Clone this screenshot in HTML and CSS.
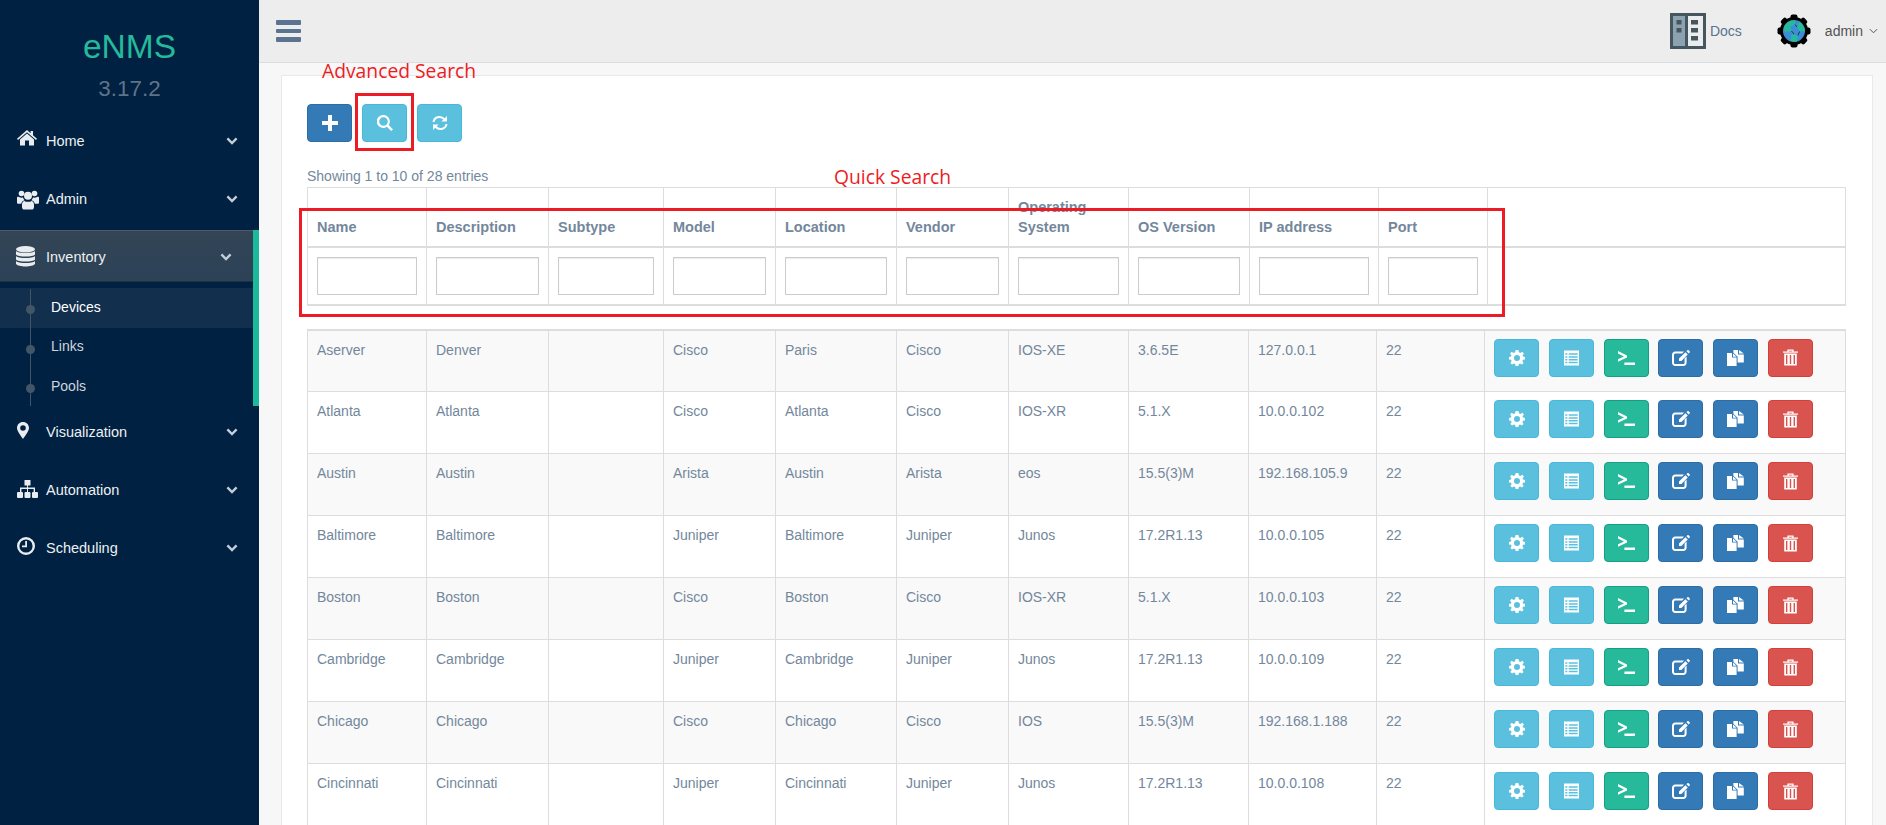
FILE: index.html
```html
<!DOCTYPE html>
<html lang="en">
    <head>
        <meta charset="UTF-8">
        <meta name="viewport" content="width=device-width, initial-scale=1.0">
        <title>eNMS - Devices</title>
        <link rel="stylesheet" href="styles.css">
    </head>
    <body>
        <svg class="sprite" width="0" height="0">
            <symbol id="i-home" viewBox="0 0 20 16"><path d="M10 0 L13.6 3.2 V1 H16 V5.3 L20 8.8 L19 10 L10 2.2 L1 10 L0 8.8 Z M10 3.6 L17 9.6 V15.6 H12 V10.6 H8 V15.6 H3 V9.6 Z"/></symbol>
            <symbol id="i-users" viewBox="0 0 22 20"><circle cx="4.5" cy="4" r="2.8"/><circle cx="17.5" cy="4" r="2.8"/><circle cx="11" cy="6.2" r="4"/><path d="M0 8.2 C0 7 1 7 2 7.4 C3.4 8.4 5 8.2 6 8 C6.4 9.4 7 10 7.6 10.8 C5.6 11.4 4.6 12.6 4.2 14.2 H1 C0 14.2 0 13.4 0 12.8 Z"/><path d="M22 8.2 C22 7 21 7 20 7.4 C18.6 8.4 17 8.2 16 8 C15.6 9.4 15 10 14.4 10.8 C16.4 11.4 17.4 12.6 17.8 14.2 H21 C22 14.2 22 13.4 22 12.8 Z"/><path d="M7.6 11.4 C9 12.6 13 12.6 14.4 11.4 C16 11.6 17 13 17 15 V17.4 C17 19 16 20 14.8 20 H7.2 C6 20 5 19 5 17.4 V15 C5 13 6 11.6 7.6 11.4 Z"/></symbol>
            <symbol id="i-database" viewBox="0 0 19 21"><ellipse cx="9.5" cy="3.2" rx="9.5" ry="3.2"/><path d="M0 5 C2 7.6 17 7.6 19 5 V8.4 C17 11.2 2 11.2 0 8.4 Z"/><path d="M0 10 C2 12.8 17 12.8 19 10 V13.4 C17 16.2 2 16.2 0 13.4 Z"/><path d="M0 15 C2 17.8 17 17.8 19 15 V17.8 C17 21.4 2 21.4 0 17.8 Z"/></symbol>
            <symbol id="i-marker" viewBox="0 0 12 17"><path fill-rule="evenodd" d="M6 0 C9.4 0 12 2.6 12 6 C12 9 8 14 6 17 C4 14 0 9 0 6 C0 2.6 2.6 0 6 0 Z M6 3.2 A2.8 2.8 0 1 0 6 8.8 A2.8 2.8 0 1 0 6 3.2 Z"/></symbol>
            <symbol id="i-sitemap" viewBox="0 0 21 18"><path d="M7.5 0 H13.5 V5.4 H11 V7.6 H18 V12 H16.6 V9 H11 V12 H10 V9 H4.4 V12 H3 V7.6 H10 V5.4 H7.5 Z"/><rect x="0" y="12" width="6" height="6" rx="1"/><rect x="7.5" y="12" width="6" height="6" rx="1"/><rect x="15" y="12" width="6" height="6" rx="1"/></symbol>
            <symbol id="i-clock" viewBox="0 0 18 18"><path fill-rule="evenodd" d="M9 0 A9 9 0 1 1 9 18 A9 9 0 1 1 9 0 Z M9 2.4 A6.6 6.6 0 1 0 9 15.6 A6.6 6.6 0 1 0 9 2.4 Z"/><path d="M8.2 4 H10 V10.2 H5 V8.6 H8.2 Z"/></symbol>
            <symbol id="i-plus" viewBox="0 0 16 16"><path d="M6 0 H10 V6 H16 V10 H10 V16 H6 V10 H0 V6 H6 Z"/></symbol>
            <symbol id="i-search" viewBox="0 0 16 16"><path fill-rule="evenodd" d="M6.5 0 A6.5 6.5 0 0 1 11.7 10.1 L16 14.4 L14.2 16 L9.9 11.8 A6.5 6.5 0 1 1 6.5 0 Z M6.5 2.2 A4.3 4.3 0 1 0 6.5 10.8 A4.3 4.3 0 1 0 6.5 2.2 Z"/></symbol>
            <symbol id="i-refresh" viewBox="0 0 16 16"><path d="M1.6 7 C2 2.4 8.2 0 12.4 4.2" fill="none" stroke="currentColor" stroke-width="2"/><path d="M14.4 9 C14 13.6 7.8 16 3.6 11.8" fill="none" stroke="currentColor" stroke-width="2"/><path d="M15 1 V6.6 H9.4 Z"/><path d="M1 15 V9.4 H6.6 Z"/></symbol>
            <symbol id="i-cog" viewBox="0 0 16 16"><path fill-rule="evenodd" d="M6.6 0 H9.4 L9.9 2.2 L11.4 2.9 L13.3 1.7 L14.9 3.6 L13.6 5.4 L14 6.6 L16 7 V9.4 L14 9.8 L13.4 11.1 L14.6 12.9 L12.9 14.6 L11.1 13.4 L9.9 13.9 L9.4 16 H6.6 L6.1 13.9 L4.9 13.4 L3.1 14.6 L1.4 12.9 L2.6 11.1 L2 9.8 L0 9.4 V7 L2 6.6 L2.4 5.4 L1.1 3.6 L2.7 1.7 L4.6 2.9 L6.1 2.2 Z M8 5 A3 3 0 1 0 8 11 A3 3 0 1 0 8 5 Z"/></symbol>
            <symbol id="i-list" viewBox="0 0 16 16"><path fill-rule="evenodd" d="M0 0 H16 V16 H0 Z M1.4 3 V4.6 H3.6 V3 Z M5 3 V4.6 H14.6 V3 Z M1.4 6 V7.6 H3.6 V6 Z M5 6 V7.6 H14.6 V6 Z M1.4 9 V10.6 H3.6 V9 Z M5 9 V10.6 H14.6 V9 Z M1.4 12 V13.6 H3.6 V12 Z M5 12 V13.6 H14.6 V12 Z"/></symbol>
            <symbol id="i-terminal" viewBox="0 0 17 14"><path d="M0 0 L9 4.4 V6.4 L0 10.8 V8.2 L6 5.4 L0 2.6 Z M6.4 11.6 H17 V14 H6.4 Z"/></symbol>
            <symbol id="i-edit" viewBox="0 0 18 16"><path d="M3.2 1.6 H12 L10.2 3.6 H3.6 C2.6 3.6 2 4.2 2 5.2 V12.4 C2 13.4 2.6 14 3.6 14 H11 C12 14 12.6 13.4 12.6 12.4 V8.4 L14.6 6.4 V12.8 C14.6 14.8 13.2 16 11.4 16 H3.2 C1.4 16 0 14.8 0 12.8 V4.8 C0 3 1.4 1.6 3.2 1.6 Z"/><path d="M13.4 2.2 L15.8 4.6 L9.4 11 H7 V8.6 Z M14.4 1.2 L15.4 0.2 C15.8 -0.1 16.2 -0.1 16.6 0.2 L17.6 1.3 C18 1.7 18 2.2 17.6 2.5 L16.8 3.6 Z"/></symbol>
            <symbol id="i-copy" viewBox="0 0 17 16"><path d="M0 3 H5 V7.6 H9.6 V16 H0 Z"/><path d="M6 3.4 L9.6 6.8 H6 Z"/><path d="M6.4 0 H11 V4.4 H16.8 V12.4 H10.6 V6.8 L6.4 2.8 Z"/><path d="M12 0 L16.8 3.4 H12 Z"/></symbol>
            <symbol id="i-trash" viewBox="0 0 15 16"><path fill-rule="evenodd" d="M4.4 0 H10.6 V2 H15 V3.2 H0 V2 H4.4 Z M5.8 1.2 V2 H9.2 V1.2 Z M1.2 4 H13.8 V16 H1.2 Z M3 5.4 V14.6 H4.4 V5.4 Z M6.8 5.4 V14.6 H8.2 V5.4 Z M10.6 5.4 V14.6 H12 V5.4 Z"/></symbol>
            <symbol id="i-chevron" viewBox="0 0 12 8"><path d="M1.4 1.4 L6 6 L10.6 1.4" fill="none" stroke="currentColor" stroke-width="2.4"/></symbol>
        </svg>

        <nav class="sidebar">
            <div class="brand">
                <div class="brand-name">eNMS</div>
                <div class="brand-version">3.17.2</div>
            </div>
            <ul class="menu">
                <li class="menu-item">
                    <svg class="menu-icon icon-home"><use href="#i-home"/></svg>
                    <span class="menu-label">Home</span>
                    <svg class="menu-chevron"><use href="#i-chevron"/></svg>
                </li>
                <li class="menu-item">
                    <svg class="menu-icon icon-users"><use href="#i-users"/></svg>
                    <span class="menu-label">Admin</span>
                    <svg class="menu-chevron"><use href="#i-chevron"/></svg>
                </li>
                <li class="menu-group">
                    <div class="menu-item menu-active">
                        <svg class="menu-icon icon-database"><use href="#i-database"/></svg>
                        <span class="menu-label">Inventory</span>
                        <svg class="menu-chevron"><use href="#i-chevron"/></svg>
                    </div>
                    <ul class="submenu">
                        <li class="sub-item sub-current"><span class="sub-dot"></span>Devices</li>
                        <li class="sub-item"><span class="sub-dot"></span>Links</li>
                        <li class="sub-item"><span class="sub-dot"></span>Pools</li>
                    </ul>
                </li>
                <li class="menu-item">
                    <svg class="menu-icon icon-marker"><use href="#i-marker"/></svg>
                    <span class="menu-label">Visualization</span>
                    <svg class="menu-chevron"><use href="#i-chevron"/></svg>
                </li>
                <li class="menu-item">
                    <svg class="menu-icon icon-sitemap"><use href="#i-sitemap"/></svg>
                    <span class="menu-label">Automation</span>
                    <svg class="menu-chevron"><use href="#i-chevron"/></svg>
                </li>
                <li class="menu-item">
                    <svg class="menu-icon icon-clock"><use href="#i-clock"/></svg>
                    <span class="menu-label">Scheduling</span>
                    <svg class="menu-chevron"><use href="#i-chevron"/></svg>
                </li>
            </ul>
        </nav>

        <div class="page">
            <header class="topbar">
                <div class="hamburger"><span></span><span></span><span></span></div>
                <div class="topbar-right">
                    <svg class="docs-icon" viewBox="0 0 36 36">
                        <rect width="36" height="36" fill="#46555e"/>
                        <rect x="3" y="3" width="12" height="30" fill="#8ba3b1"/>
                        <rect x="18" y="3" width="15" height="30" fill="#e9edee"/>
                        <rect x="6.5" y="7" width="5" height="4.5" fill="#46555e"/>
                        <rect x="6.5" y="15" width="5" height="4.5" fill="#46555e"/>
                        <rect x="21" y="7" width="7" height="4.5" fill="#46555e"/>
                        <rect x="21" y="15" width="7" height="4.5" fill="#46555e"/>
                        <rect x="21" y="23" width="7" height="4.5" fill="#46555e"/>
                    </svg>
                    <span class="docs-label">Docs</span>
                    <svg class="user-icon" viewBox="0 0 34 34">
                        <g fill="#000">
                            <circle cx="17" cy="17" r="14"/>
                            <rect x="13.5" y="0.5" width="7" height="33" rx="2"/>
                            <rect x="13.5" y="0.5" width="7" height="33" rx="2" transform="rotate(45 17 17)"/>
                            <rect x="13.5" y="0.5" width="7" height="33" rx="2" transform="rotate(90 17 17)"/>
                            <rect x="13.5" y="0.5" width="7" height="33" rx="2" transform="rotate(135 17 17)"/>
                        </g>
                        <circle cx="17" cy="17" r="11" fill="#3b8ed6"/>
                        <path d="M8 11 C10 8 14 6 18 6.2 L18 10.5 L13.5 12.5 L14.5 17 L8 18 C6.4 16 6.6 13 8 11 Z" fill="#26b99a"/>
                        <path d="M22 7.6 C25 9.4 27.6 13 28 17 L22.5 17.5 L20 13 Z" fill="#26b99a"/>
                        <path d="M14.5 20.5 L21 21.5 L20 27.5 C18 28.2 15.6 27.8 13.6 27 Z" fill="#26b99a"/>
                        <path d="M18 10.5 L20 13 M14.5 17 L17 20 M22.5 17.5 L21 21.5" fill="none" stroke="#123" stroke-width="0.8"/>
                    </svg>
                    <span class="user-label">admin</span>
                    <svg class="user-chevron" viewBox="0 0 10 6"><path d="M1 1 L5 5 L9 1" fill="none" stroke="currentColor" stroke-width="1.1"/></svg>
                </div>
            </header>

            <main class="content">
                <span class="note note-advanced">Advanced Search</span>
                <span class="note note-quick">Quick Search</span>
                <div class="note-box box-advanced"></div>
                <div class="note-box box-quick"></div>

                <section class="panel">
                    <div class="toolbar">
                        <button type="button" class="btn btn-primary"><svg class="icon-plus"><use href="#i-plus"/></svg></button>
                        <button type="button" class="btn btn-info"><svg class="icon-search"><use href="#i-search"/></svg></button>
                        <button type="button" class="btn btn-info"><svg class="icon-refresh"><use href="#i-refresh"/></svg></button>
                    </div>
                    <p class="info-line">Showing 1 to 10 of 28 entries</p>

                    <table class="grid grid-head">
                        <colgroup>
                            <col class="col-name"><col class="col-desc"><col class="col-sub"><col class="col-model"><col class="col-loc"><col class="col-vendor"><col class="col-os"><col class="col-ver-h"><col class="col-ip-h"><col class="col-port-h"><col>
                        </colgroup>
                        <thead>
                            <tr class="head-row">
                                <th>Name</th><th>Description</th><th>Subtype</th><th>Model</th><th>Location</th><th>Vendor</th><th>Operating System</th><th>OS Version</th><th>IP address</th><th>Port</th><th></th>
                            </tr>
                            <tr class="filter-row">
                                <th><input type="text"></th><th><input type="text"></th><th><input type="text"></th><th><input type="text"></th><th><input type="text"></th><th><input type="text"></th><th><input type="text"></th><th><input type="text"></th><th><input type="text"></th><th><input type="text"></th><th></th>
                            </tr>
                        </thead>
                    </table>

                    <table class="grid grid-body">
                        <colgroup>
                            <col class="col-name"><col class="col-desc"><col class="col-sub"><col class="col-model"><col class="col-loc"><col class="col-vendor"><col class="col-os"><col class="col-ver"><col class="col-ip"><col class="col-port"><col>
                        </colgroup>
                        <tbody>
                            <tr><td>Aserver</td><td>Denver</td><td></td><td>Cisco</td><td>Paris</td><td>Cisco</td><td>IOS-XE</td><td>3.6.5E</td><td>127.0.0.1</td><td>22</td>
                                <td class="actions"><div class="action-row"><button type="button" class="btn btn-info"><svg class="icon-cog"><use href="#i-cog"/></svg></button><button type="button" class="btn btn-info"><svg class="icon-list"><use href="#i-list"/></svg></button><button type="button" class="btn btn-success"><svg class="icon-terminal"><use href="#i-terminal"/></svg></button><button type="button" class="btn btn-primary"><svg class="icon-edit"><use href="#i-edit"/></svg></button><button type="button" class="btn btn-primary"><svg class="icon-copy"><use href="#i-copy"/></svg></button><button type="button" class="btn btn-danger"><svg class="icon-trash"><use href="#i-trash"/></svg></button></div></td></tr>
                            <tr><td>Atlanta</td><td>Atlanta</td><td></td><td>Cisco</td><td>Atlanta</td><td>Cisco</td><td>IOS-XR</td><td>5.1.X</td><td>10.0.0.102</td><td>22</td>
                                <td class="actions"><div class="action-row"><button type="button" class="btn btn-info"><svg class="icon-cog"><use href="#i-cog"/></svg></button><button type="button" class="btn btn-info"><svg class="icon-list"><use href="#i-list"/></svg></button><button type="button" class="btn btn-success"><svg class="icon-terminal"><use href="#i-terminal"/></svg></button><button type="button" class="btn btn-primary"><svg class="icon-edit"><use href="#i-edit"/></svg></button><button type="button" class="btn btn-primary"><svg class="icon-copy"><use href="#i-copy"/></svg></button><button type="button" class="btn btn-danger"><svg class="icon-trash"><use href="#i-trash"/></svg></button></div></td></tr>
                            <tr><td>Austin</td><td>Austin</td><td></td><td>Arista</td><td>Austin</td><td>Arista</td><td>eos</td><td>15.5(3)M</td><td>192.168.105.9</td><td>22</td>
                                <td class="actions"><div class="action-row"><button type="button" class="btn btn-info"><svg class="icon-cog"><use href="#i-cog"/></svg></button><button type="button" class="btn btn-info"><svg class="icon-list"><use href="#i-list"/></svg></button><button type="button" class="btn btn-success"><svg class="icon-terminal"><use href="#i-terminal"/></svg></button><button type="button" class="btn btn-primary"><svg class="icon-edit"><use href="#i-edit"/></svg></button><button type="button" class="btn btn-primary"><svg class="icon-copy"><use href="#i-copy"/></svg></button><button type="button" class="btn btn-danger"><svg class="icon-trash"><use href="#i-trash"/></svg></button></div></td></tr>
                            <tr><td>Baltimore</td><td>Baltimore</td><td></td><td>Juniper</td><td>Baltimore</td><td>Juniper</td><td>Junos</td><td>17.2R1.13</td><td>10.0.0.105</td><td>22</td>
                                <td class="actions"><div class="action-row"><button type="button" class="btn btn-info"><svg class="icon-cog"><use href="#i-cog"/></svg></button><button type="button" class="btn btn-info"><svg class="icon-list"><use href="#i-list"/></svg></button><button type="button" class="btn btn-success"><svg class="icon-terminal"><use href="#i-terminal"/></svg></button><button type="button" class="btn btn-primary"><svg class="icon-edit"><use href="#i-edit"/></svg></button><button type="button" class="btn btn-primary"><svg class="icon-copy"><use href="#i-copy"/></svg></button><button type="button" class="btn btn-danger"><svg class="icon-trash"><use href="#i-trash"/></svg></button></div></td></tr>
                            <tr><td>Boston</td><td>Boston</td><td></td><td>Cisco</td><td>Boston</td><td>Cisco</td><td>IOS-XR</td><td>5.1.X</td><td>10.0.0.103</td><td>22</td>
                                <td class="actions"><div class="action-row"><button type="button" class="btn btn-info"><svg class="icon-cog"><use href="#i-cog"/></svg></button><button type="button" class="btn btn-info"><svg class="icon-list"><use href="#i-list"/></svg></button><button type="button" class="btn btn-success"><svg class="icon-terminal"><use href="#i-terminal"/></svg></button><button type="button" class="btn btn-primary"><svg class="icon-edit"><use href="#i-edit"/></svg></button><button type="button" class="btn btn-primary"><svg class="icon-copy"><use href="#i-copy"/></svg></button><button type="button" class="btn btn-danger"><svg class="icon-trash"><use href="#i-trash"/></svg></button></div></td></tr>
                            <tr><td>Cambridge</td><td>Cambridge</td><td></td><td>Juniper</td><td>Cambridge</td><td>Juniper</td><td>Junos</td><td>17.2R1.13</td><td>10.0.0.109</td><td>22</td>
                                <td class="actions"><div class="action-row"><button type="button" class="btn btn-info"><svg class="icon-cog"><use href="#i-cog"/></svg></button><button type="button" class="btn btn-info"><svg class="icon-list"><use href="#i-list"/></svg></button><button type="button" class="btn btn-success"><svg class="icon-terminal"><use href="#i-terminal"/></svg></button><button type="button" class="btn btn-primary"><svg class="icon-edit"><use href="#i-edit"/></svg></button><button type="button" class="btn btn-primary"><svg class="icon-copy"><use href="#i-copy"/></svg></button><button type="button" class="btn btn-danger"><svg class="icon-trash"><use href="#i-trash"/></svg></button></div></td></tr>
                            <tr><td>Chicago</td><td>Chicago</td><td></td><td>Cisco</td><td>Chicago</td><td>Cisco</td><td>IOS</td><td>15.5(3)M</td><td>192.168.1.188</td><td>22</td>
                                <td class="actions"><div class="action-row"><button type="button" class="btn btn-info"><svg class="icon-cog"><use href="#i-cog"/></svg></button><button type="button" class="btn btn-info"><svg class="icon-list"><use href="#i-list"/></svg></button><button type="button" class="btn btn-success"><svg class="icon-terminal"><use href="#i-terminal"/></svg></button><button type="button" class="btn btn-primary"><svg class="icon-edit"><use href="#i-edit"/></svg></button><button type="button" class="btn btn-primary"><svg class="icon-copy"><use href="#i-copy"/></svg></button><button type="button" class="btn btn-danger"><svg class="icon-trash"><use href="#i-trash"/></svg></button></div></td></tr>
                            <tr><td>Cincinnati</td><td>Cincinnati</td><td></td><td>Juniper</td><td>Cincinnati</td><td>Juniper</td><td>Junos</td><td>17.2R1.13</td><td>10.0.0.108</td><td>22</td>
                                <td class="actions"><div class="action-row"><button type="button" class="btn btn-info"><svg class="icon-cog"><use href="#i-cog"/></svg></button><button type="button" class="btn btn-info"><svg class="icon-list"><use href="#i-list"/></svg></button><button type="button" class="btn btn-success"><svg class="icon-terminal"><use href="#i-terminal"/></svg></button><button type="button" class="btn btn-primary"><svg class="icon-edit"><use href="#i-edit"/></svg></button><button type="button" class="btn btn-primary"><svg class="icon-copy"><use href="#i-copy"/></svg></button><button type="button" class="btn btn-danger"><svg class="icon-trash"><use href="#i-trash"/></svg></button></div></td></tr>
                        </tbody>
                    </table>
                </section>
            </main>
        </div>
    </body>
</html>
```

FILE: styles.css
```css
* {
    box-sizing: border-box;
}

html,
body {
    height: 100%;
}

body {
    font-family: "Liberation Sans", Arial, sans-serif;
    font-size: 14px;
    line-height: 20px;
    color: #73879c;
    background-color: #f7f7f7;
    margin: 0;
    padding: 0;
    display: flex;
    overflow: hidden;
}

.sprite {
    position: absolute;
}

ul {
    list-style: none;
    margin: 0;
    padding: 0;
}

/* sidebar */
.sidebar {
    width: 259px;
    flex: none;
    height: 100%;
    background-color: #002142;
    color: #ecf0f1;
}

.brand {
    height: 115px;
    padding-top: 28px;
    text-align: center;
}

.brand-name {
    font-size: 33.5px;
    line-height: 38px;
    color: #26b99a;
}

.brand-version {
    font-size: 22.4px;
    line-height: 28px;
    margin-top: 9px;
    color: #5f7388;
}

.menu-item {
    height: 52px;
    margin-bottom: 6px;
    display: flex;
    align-items: center;
    padding-left: 46px;
    position: relative;
    font-size: 14.5px;
}

.menu-label {
    flex: 1;
}

.menu-icon {
    position: absolute;
    fill: #e9edf0;
}

.icon-home {
    left: 17px;
    top: 15px;
    width: 20px;
    height: 16px;
}

.icon-users {
    left: 17px;
    top: 16px;
    width: 22px;
    height: 21px;
}

.icon-database {
    left: 16px;
    top: 15px;
    width: 19px;
    height: 21px;
}

.icon-marker {
    left: 17px;
    top: 16px;
    width: 12px;
    height: 17px;
}

.icon-sitemap {
    left: 17px;
    top: 16px;
    width: 21px;
    height: 18px;
}

.icon-clock {
    left: 17px;
    top: 15px;
    width: 18px;
    height: 18px;
}

.menu-chevron {
    width: 12px;
    height: 8px;
    margin-right: 21px;
    color: #c3ced8;
}

.menu-group {
    border-right: 6px solid #1abb9c;
    margin-top: -1px;
    margin-bottom: 0;
}

.menu-active {
    height: 52px;
    margin: 0;
    padding-top: 1px;
    border-top: 1px solid #4b5b6b;
    border-bottom: 1px solid #22303f;
    background: linear-gradient(#334556, #2c4257);
}

.submenu {
    padding: 6px 0 0;
    position: relative;
    height: 124px;
}

.submenu::before {
    content: "";
    position: absolute;
    left: 30px;
    top: 7px;
    bottom: 0;
    width: 1px;
    background-color: #425668;
    z-index: 1;
}

.sub-item {
    height: 39.5px;
    display: flex;
    align-items: center;
    padding-left: 51px;
    padding-bottom: 2px;
    position: relative;
    color: #cfd6dc;
}

.sub-current {
    background-color: #122f4d;
    color: #fff;
}

.sub-dot {
    position: absolute;
    left: 26px;
    top: 17px;
    width: 9px;
    height: 9px;
    border-radius: 50%;
    background-color: #425668;
    z-index: 1;
}

/* top bar */
.page {
    flex: 1;
    min-width: 0;
    display: flex;
    flex-direction: column;
    height: 100%;
}

.topbar {
    height: 63px;
    flex: none;
    background-color: #ededed;
    border-bottom: 1px solid #d9dee4;
    display: flex;
    align-items: center;
    justify-content: space-between;
    padding: 0 8px 0 17px;
}

.hamburger {
    width: 25px;
    display: flex;
    flex-direction: column;
    gap: 4px;
}

.hamburger span {
    height: 4.5px;
    border-radius: 1px;
    background-color: #5a738e;
}

.topbar-right {
    display: flex;
    align-items: center;
}

.docs-icon {
    width: 36px;
    height: 36px;
    margin-right: 4px;
}

.docs-label {
    color: #5a738e;
    margin-right: 35px;
}

.user-icon {
    width: 34px;
    height: 34px;
    margin-right: 14px;
}

.user-label {
    color: #515356;
    margin-right: 6px;
}

.user-chevron {
    width: 9px;
    height: 6px;
    color: #515356;
}

/* main area */
.content {
    flex: 1;
    min-height: 0;
    position: relative;
    padding: 12px 13px 0 22px;
}

.panel {
    background-color: #fff;
    border: 1px solid #e6e9ed;
    height: 900px;
    padding: 28px 25px 0;
}

.toolbar {
    display: flex;
    gap: 10px;
}

.btn {
    width: 45px;
    height: 38px;
    padding: 0;
    border: 1px solid;
    border-radius: 4px;
    display: inline-flex;
    align-items: center;
    justify-content: center;
    fill: #fff;
    color: #fff;
}

.btn-primary {
    background-color: #337ab7;
    border-color: #2e6da4;
}

.btn-info {
    background-color: #5bc0de;
    border-color: #46b8da;
}

.btn-success {
    background-color: #26b99a;
    border-color: #169f85;
    margin-right: -1px;
}

.btn-danger {
    background-color: #d9534f;
    border-color: #d43f3a;
}

.icon-plus {
    width: 16px;
    height: 16px;
}

.icon-search {
    width: 16px;
    height: 16px;
}

.icon-refresh {
    width: 16px;
    height: 16px;
}

.icon-cog {
    width: 16px;
    height: 16px;
}

.icon-list {
    width: 15px;
    height: 16px;
}

.icon-terminal {
    width: 17px;
    height: 14px;
}

.icon-edit {
    width: 18px;
    height: 16px;
}

.icon-copy {
    width: 17px;
    height: 16px;
}

.icon-trash {
    width: 15px;
    height: 17px;
}

.info-line {
    margin: 24px 0 1px;
}

/* tables */
.grid {
    border-collapse: collapse;
    table-layout: fixed;
    width: 1539px;
}

.grid th,
.grid td {
    border: 1px solid #ddd;
    padding: 0 9px;
    text-align: left;
}

.grid-head {
    margin-bottom: 23px;
}

.head-row th {
    height: 59px;
    padding-bottom: 9px;
    vertical-align: bottom;
    font-size: 14.5px;
    border-bottom-width: 2px;
}

.filter-row th {
    height: 58px;
    border-bottom-width: 2px;
}

.filter-row input {
    display: block;
    width: 100%;
    height: 38px;
    border: 1px solid #ccc;
    background-color: #fff;
    box-shadow: inset 0 1px 1px rgba(0, 0, 0, 0.08);
}

.col-name {
    width: 119px;
}

.col-desc {
    width: 122px;
}

.col-sub {
    width: 115px;
}

.col-model {
    width: 112px;
}

.col-loc {
    width: 121px;
}

.col-vendor {
    width: 112px;
}

.col-os {
    width: 120px;
}

.col-ver {
    width: 120px;
}

.col-ver-h {
    width: 121px;
}

.col-ip-h {
    width: 129px;
}

.col-port-h {
    width: 109px;
}

.col-ip {
    width: 128px;
}

.col-port {
    width: 108px;
}

.grid-body {
    border-top: 2px solid #ddd;
}

.grid-body td {
    height: 62px;
    padding-top: 9px;
    padding-bottom: 8px;
    vertical-align: top;
}

.grid-body tr:nth-child(odd) td {
    background-color: #f9f9f9;
}

.grid-body .actions {
    padding: 8px 0 0 9px;
}

.action-row {
    display: flex;
    gap: 10px;
}

/* red notes drawn over the screenshot */
.note {
    position: absolute;
    font-family: "Open Sans", sans-serif;
    font-size: 19.3px;
    line-height: 24px;
    color: #ed1c24;
    z-index: 2;
}

.note-advanced {
    left: 63px;
    top: -4px;
}

.note-quick {
    left: 575px;
    top: 102px;
}

.note-box {
    position: absolute;
    border: 3px solid #ed1c24;
    z-index: 2;
}

.box-advanced {
    left: 96px;
    top: 30px;
    width: 59px;
    height: 58px;
}

.box-quick {
    left: 40px;
    top: 145px;
    width: 1206px;
    height: 109px;
}
```
